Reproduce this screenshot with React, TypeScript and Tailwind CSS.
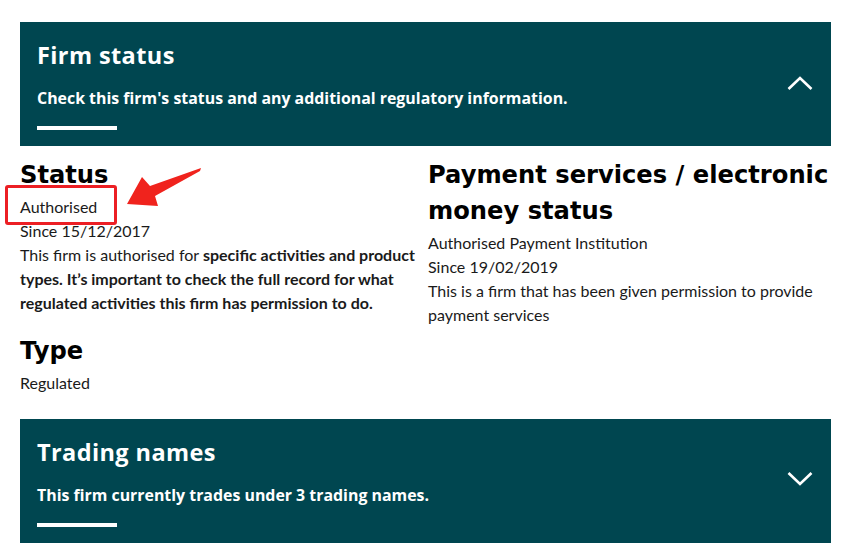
import { ReactNode } from 'react';

const Chevron = ({ up }: { up?: boolean }) => (
	<svg width="26" height="16" viewBox="0 0 26 16" className="shrink-0">
		<path
			d={up ? 'M1.5 14 L13 3 L24.5 14' : 'M1.5 2 L13 13 L24.5 2'}
			fill="none"
			stroke="white"
			strokeWidth="2.6"
		/>
	</svg>
);

const Panel = ({ title, text, up }: { title: string; text: string; up?: boolean }) => (
	<div className="h-[124px] bg-[#004650] flex items-center justify-between pl-[17px] pr-[18px]">
		<div className="self-start flex flex-col pt-[19px] text-white font-['Open_Sans',sans-serif]">
			<h2 className="text-[23.5px] leading-[28px] font-bold tracking-[0.4px]">{title}</h2>
			<p className="mt-[19px] text-[15.9px] leading-[20px] font-bold">{text}</p>
			<div className="mt-[18px] h-[4px] w-[80px] bg-white" />
		</div>
		<div className={up ? 'mt-[-2px]' : 'mt-[-4px]'}>
			<Chevron up={up} />
		</div>
	</div>
);

const Heading = ({ children }: { children: ReactNode }) => (
	<h3 className="font-['DejaVu_Sans',sans-serif] font-bold text-[24.2px] leading-[36px] text-black mb-[2px]">
		{children}
	</h3>
);

export default function App() {
	return (
		<div className="w-[844px] h-[555px] overflow-hidden bg-white pt-[22px] pl-[20px] pr-[13px] font-['Lato',sans-serif] text-[16px] leading-[24px] text-[#1a1a1a]">
			<Panel
				title="Firm status"
				text="Check this firm's status and any additional regulatory information."
				up
			/>

			<div className="grid grid-cols-[403px_403px] gap-x-[5px] mt-[11px]">
				<div className="relative">
					<Heading>Status</Heading>
					<p>Authorised</p>
					<p>Since 15/12/2017</p>
					<p>
						This firm is authorised for{' '}
						<strong className="font-bold">
							specific activities and product types. It’s important to check the full
							record for what regulated activities this firm has permission to do.
						</strong>
					</p>
					<div className="mt-[18px]">
						<Heading>Type</Heading>
						<p>Regulated</p>
					</div>

					{/* annotation: red box + arrow */}
					<div className="absolute left-[-15px] top-[28px] w-[112px] h-[40px] border-[3px] border-[#ec1f24] rounded-[3px]" />
					<svg
						className="absolute left-[80px] top-[3px]"
						width="110"
						height="60"
						viewBox="0 0 110 60"
					>
						<path
							d="M27 44 L42 17 L50 26 L101 8 L100 11 L55 36 L58 46 Z"
							fill="#f0231d"
						/>
					</svg>
				</div>

				<div>
					<Heading>Payment services / electronic money status</Heading>
					<p>Authorised Payment Institution</p>
					<p>Since 19/02/2019</p>
					<p>This is a firm that has been given permission to provide payment services</p>
				</div>
			</div>

			<div className="mt-[24px]">
				<Panel title="Trading names" text="This firm currently trades under 3 trading names." />
			</div>
		</div>
	);
}
